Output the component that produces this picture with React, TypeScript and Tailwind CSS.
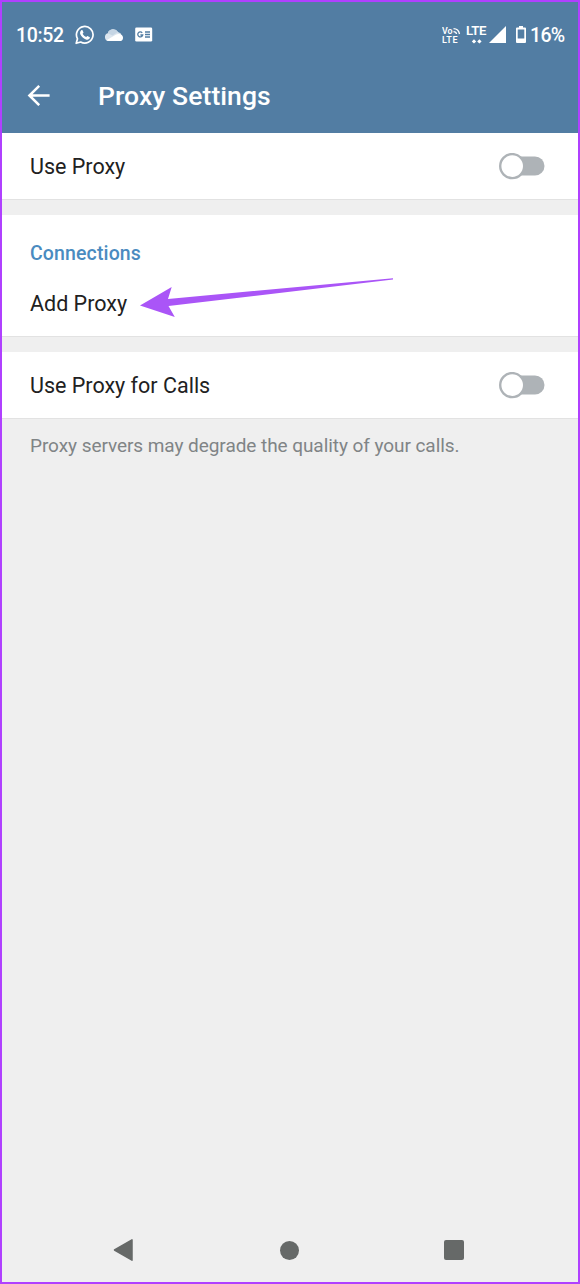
import type { ReactNode } from "react";

function StatusBar() {
  return (
    <div className="flex h-[65px] items-center pr-[14px] pl-[14px] text-[19.5px] tracking-[-0.4px] text-white">
      <span className="w-[59px] pt-[2px] font-medium tracking-[-0.35px] whitespace-nowrap">10:52</span>
      <svg className="h-5 w-5 shrink-0" viewBox="0 0 20 20" fill="none">
        <path d="M1.2 18.3 2.5 13.8A8.3 8.3 0 1 1 5.7 17Z" stroke="white" strokeWidth="1.7" strokeLinejoin="round" />
        <path
          d="M6.1 5.4c.5-.5 1.2-.5 1.5.1l.8 1.7c.2.5-.1.8-.8 1.6.8 1.6 2.1 2.7 3.7 3.3.8-1 .9-1.2 1.5-.9l1.7.8c.5.3.5.9.1 1.6-.7 1.1-2.2 1.4-3.7.8-2.6-.9-4.7-2.9-5.6-5.1-.5-1.5-.2-2.9.8-3.9Z"
          fill="white"
        />
      </svg>
      <svg className="ml-[9px] h-[14px] w-5 shrink-0" viewBox="0 0 20 14">
        <path d="M4.5 13a4 4 0 0 1-.7-7.8A5.6 5.6 0 0 1 14 4.1a5 5 0 0 1 2 8.9Z" fill="#dbe5ee" />
        <path d="M3.8 5.2A5.6 5.6 0 0 1 14 4.1L8.5 7.5Z" fill="#c5d5e4" />
        <path d="m2.5 12.3 9.2-5.5c2-1.2 4.4-.9 6 .1 2.3 1.8 1.6 6.1-1.8 6.1H4.5c-.8 0-1.5-.3-2-.7Z" fill="white" />
      </svg>
      <svg className="ml-[11px] h-[15px] w-[18px] shrink-0" viewBox="0 0 18 15">
        <rect x="0.2" y="0.5" width="17" height="14" rx="1.3" fill="white" />
        <path d="M7.2 5.8A2.5 2.5 0 1 0 7.7 8H5.4M10 5h5M10 7.5h5M10 10h5" fill="none" stroke="#527da3" strokeWidth="1.3" />
      </svg>
      <div className="ml-auto flex items-center">
        <svg className="mr-[5px] h-[18px] w-[19px] tracking-normal" viewBox="0 0 19 18">
          <text x="0" y="8" fill="white" fontFamily="Roboto, sans-serif" fontWeight="600" fontSize="8.8">Vo</text>
          <text x="0" y="17" fill="white" fontFamily="Roboto, sans-serif" fontWeight="600" fontSize="9" textLength="15.5">LTE</text>
          <path d="M11.5 5.7q2.6 0 3 2.3M11.5 2.7q5 .2 6 5.3" fill="none" stroke="white" strokeWidth="1.3" />
        </svg>
        <svg className="mr-[1px] h-[22px] w-[22px] tracking-normal" viewBox="0 0 22 22">
          <text x="0" y="11" fill="white" fontFamily="Roboto, sans-serif" fontWeight="600" fontSize="13.2" textLength="20.5">LTE</text>
          <path d="m8 15.2 2.2 2.2L8 19.6l-2.2-2.2Zm5.4 0 2.2 2.2-2.2 2.2-2.2-2.2Z" fill="white" />
        </svg>
        <svg className="mr-[10px] h-[17px] w-[17px]" viewBox="0 0 17 17">
          <path d="M17 0v17H0Z" fill="white" />
        </svg>
        <svg className="mr-[4px] h-[17px] w-[10px]" viewBox="0 0 10 17">
          <path fillRule="evenodd" d="M3 0h4v1.5h2q1 0 1 1V16q0 1-1 1H1q-1 0-1-1V2.5q0-1 1-1h2ZM1.7 3.4v9h6.6v-9Z" fill="white" />
        </svg>
        <span className="w-[34px] pt-[2px] font-medium tracking-[-0.7px] whitespace-nowrap">16%</span>
      </div>
    </div>
  );
}

function Toggle({ label }: { label: string }) {
  return (
    <button role="switch" aria-checked={false} aria-label={label} className="flex h-[27px] w-[46px] shrink-0">
      <svg className="h-[27px] w-[46px]" viewBox="0 0 46 27">
        <rect x="8" y="3.5" width="37.5" height="19" rx="9.5" fill="#aeb3b7" />
        <circle cx="13.2" cy="13.1" r="12" fill="white" stroke="#aeb3b7" strokeWidth="2.4" />
      </svg>
    </button>
  );
}

function SwitchRow({ children, label }: { children: ReactNode; label: string }) {
  return (
    <div className="flex h-[67px] items-center justify-between border-b border-[#e2e2e2] bg-white pr-[33px] pl-[28px]">
      {children}
      <Toggle label={label} />
    </div>
  );
}

export default function App() {
  return (
    <div className="flex h-[1284px] w-[580px] flex-col border-2 border-[#b040ff] bg-[#efefef] font-['Roboto',sans-serif] text-[#212121]">
      <header className="h-[131px] shrink-0 bg-[#527da3] text-white">
        <StatusBar />
        <div className="flex h-[56px] items-center pl-[25px]">
          <svg className="h-[22px] w-[24px]" viewBox="0 0 24 22" fill="none" stroke="white" strokeWidth="2.5">
            <path d="M22.6 11.5H2.5M12.2 1.8 2.4 11.5l9.8 9.7" />
          </svg>
          <h1 className="ml-[47px] pt-px text-[26.5px] font-medium tracking-[0.08px] whitespace-nowrap">Proxy Settings</h1>
        </div>
      </header>
      <SwitchRow label="Use Proxy">
        <span className="pt-[2px] text-[21.5px] leading-[30px]">Use Proxy</span>
      </SwitchRow>
      <section className="relative mt-[15px] flex h-[122px] shrink-0 flex-col border-b border-[#e2e2e2] bg-white pt-[25px] pl-[28px]">
        <h2 className="text-[19.5px] leading-[28px] font-medium tracking-[0.13px] text-[#4a8bc0]">Connections</h2>
        <span className="mt-[21px] text-[21.5px] leading-[30px]">Add Proxy</span>
        <svg className="absolute top-[60px] left-[137px] h-[44px] w-[256px]" viewBox="139 275 256 44">
          <path d="M140 305.5 171.7 287l-3.7 12L393 278.2v1.3L168.5 306l6.3 11Z" fill="#aa55f7" />
        </svg>
      </section>
      <div className="mt-[15px]">
        <SwitchRow label="Use Proxy for Calls">
          <span className="pt-[2px] text-[21.5px] leading-[30px]">Use Proxy for Calls</span>
        </SwitchRow>
      </div>
      <p className="mt-[14px] pl-[28px] text-[19px] leading-[26px] tracking-[-0.06px] whitespace-nowrap text-[#808486]">
        Proxy servers may degrade the quality of your calls.
      </p>
      <nav className="mt-auto flex h-[64px] items-center justify-between pr-[114px] pl-[111px]">
        <svg className="h-[24px] w-[21px]" viewBox="0 0 21 24">
          <path d="M1.5 12 19 1.8v20.4Z" fill="#666968" stroke="#666968" strokeWidth="1.5" strokeLinejoin="round" />
        </svg>
        <div className="ml-px h-[19px] w-[19px] rounded-full bg-[#666968]" />
        <div className="h-[20px] w-[20px] rounded-[2px] bg-[#666968]" />
      </nav>
    </div>
  );
}
